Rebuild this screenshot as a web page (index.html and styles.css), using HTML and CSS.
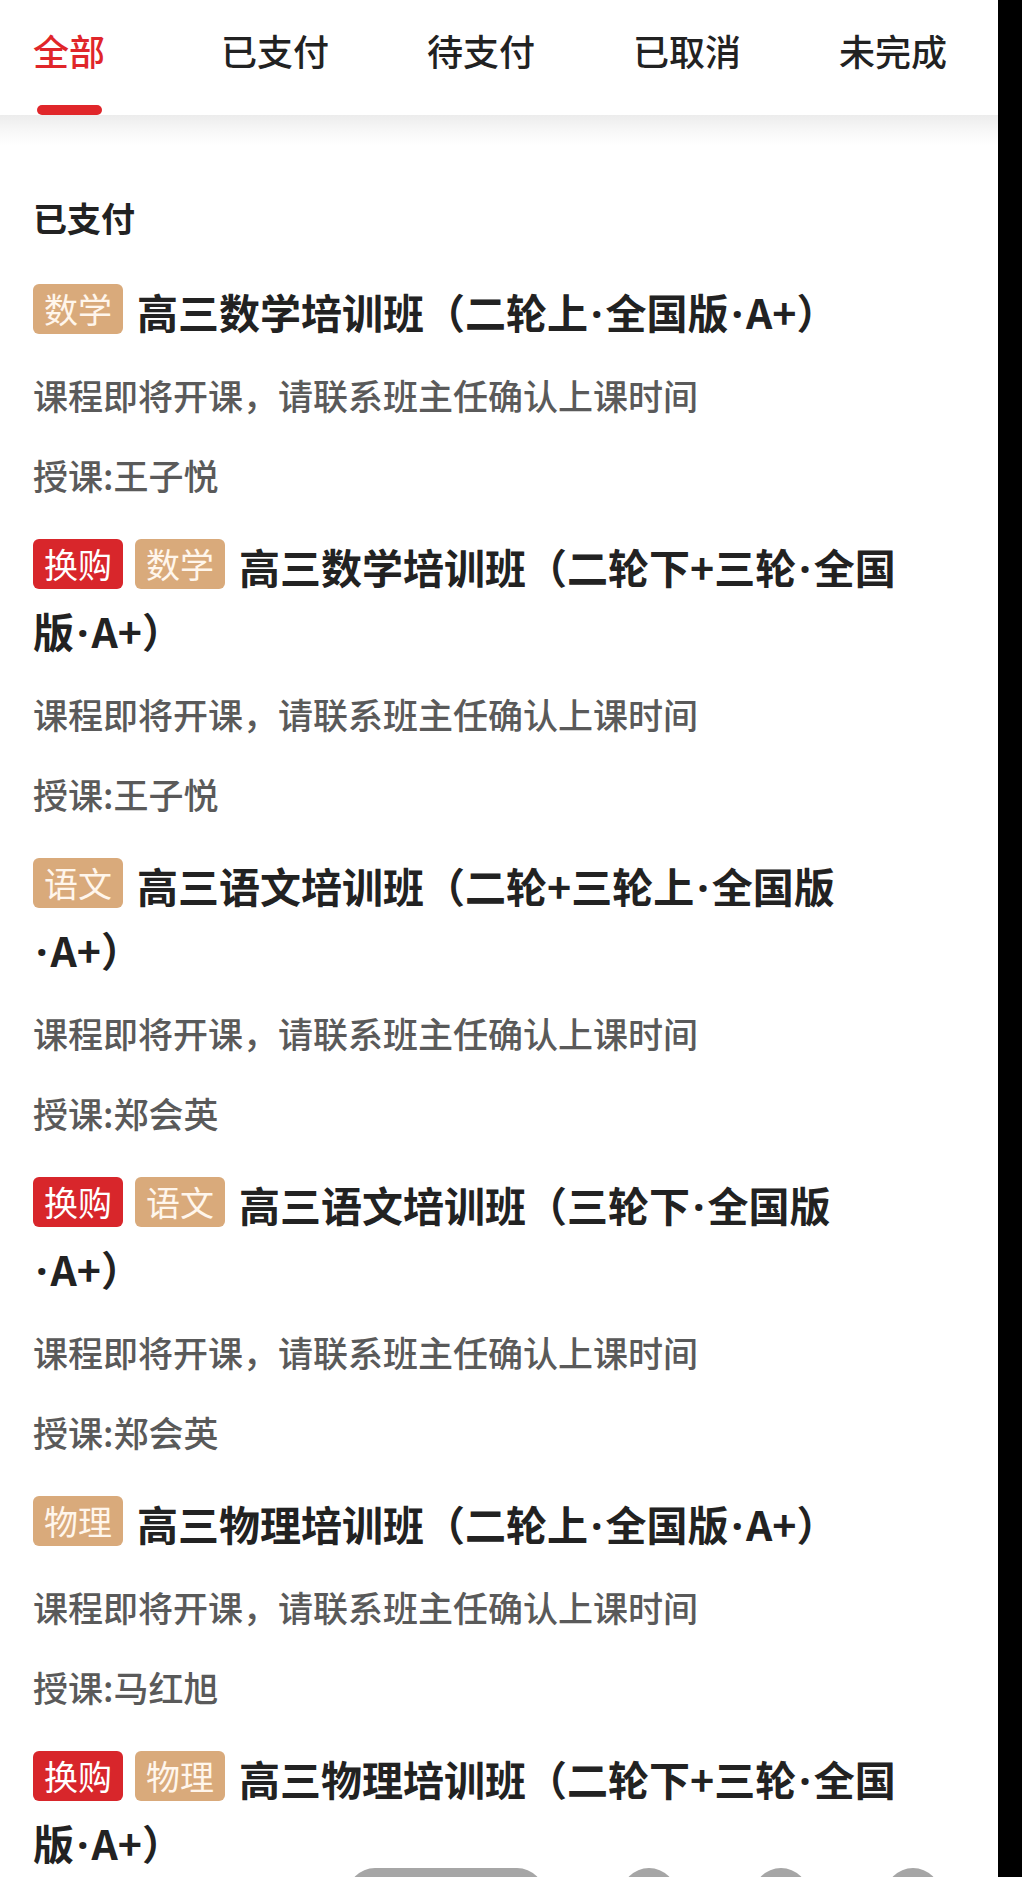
FILE: index.html
```html
<!DOCTYPE html>
<html lang="zh-CN">
<head>
<meta charset="utf-8">
<title>订单</title>
<link rel="stylesheet" href="styles.css">
</head>
<body>
<div class="page">
  <nav class="tabs">
    <div class="tab active">全部</div>
    <div class="tab">已支付</div>
    <div class="tab">待支付</div>
    <div class="tab">已取消</div>
    <div class="tab">未完成</div>
  </nav>
  <div class="band"></div>

  <section class="section">
    <h2 class="section-title">已支付</h2>
    <div class="list">
      <div class="course">
        <div class="title"><span class="tag subj">数学</span><span class="name">高三数学培训班（二轮上<span class="sep">·</span>全国版<span class="sep">·</span>A+）</span></div>
        <div class="desc">课程即将开课，请联系班主任确认上课时间</div>
        <div class="teacher">授课:王子悦</div>
      </div>
      <div class="course">
        <div class="title"><span class="tag swap">换购</span><span class="tag subj">数学</span><span class="name">高三数学培训班（二轮下+三轮<span class="sep">·</span>全国版<span class="sep">·</span>A+）</span></div>
        <div class="desc">课程即将开课，请联系班主任确认上课时间</div>
        <div class="teacher">授课:王子悦</div>
      </div>
      <div class="course">
        <div class="title"><span class="tag subj">语文</span><span class="name">高三语文培训班（二轮+三轮上<span class="sep">·</span>全国版<span class="sep">·</span>A+）</span></div>
        <div class="desc">课程即将开课，请联系班主任确认上课时间</div>
        <div class="teacher">授课:郑会英</div>
      </div>
      <div class="course">
        <div class="title"><span class="tag swap">换购</span><span class="tag subj">语文</span><span class="name">高三语文培训班（三轮下<span class="sep">·</span>全国版<span class="sep">·</span>A+）</span></div>
        <div class="desc">课程即将开课，请联系班主任确认上课时间</div>
        <div class="teacher">授课:郑会英</div>
      </div>
      <div class="course">
        <div class="title"><span class="tag subj">物理</span><span class="name">高三物理培训班（二轮上<span class="sep">·</span>全国版<span class="sep">·</span>A+）</span></div>
        <div class="desc">课程即将开课，请联系班主任确认上课时间</div>
        <div class="teacher">授课:马红旭</div>
      </div>
      <div class="course">
        <div class="title"><span class="tag swap">换购</span><span class="tag subj">物理</span><span class="name">高三物理培训班（二轮下+三轮<span class="sep">·</span>全国版<span class="sep">·</span>A+）</span></div>
        <div class="desc">课程即将开课，请联系班主任确认上课时间</div>
        <div class="teacher">授课:马红旭</div>
      </div>
    </div>
  </section>

  <div class="floating">
    <span class="pill"></span>
    <span class="dot"></span>
    <span class="dot"></span>
    <span class="dot"></span>
  </div>
</div>
</body>
</html>
```
FILE: styles.css
```css
html {
  background: #000;
}
body {
  margin: 0;
  background: #000;
  font-family: "Noto Sans CJK SC", "Noto Sans", sans-serif;
  color: #222;
}
.page {
  position: relative;
  width: 998px;
  height: 1877px;
  overflow: hidden;
  background: #fff;
}

/* tabs */
.tabs {
  display: flex;
  height: 115px;
  padding-left: 33px;
  background: #fff;
}
.tab {
  position: relative;
  width: 206px;
  padding-top: 25px;
  font-size: 36px;
  line-height: 50px;
  font-weight: 500;
  text-align: center;
  color: #222;
  box-sizing: border-box;
}
.tab.active {
  width: auto;
  margin-right: 67px;
  color: #e0262a;
}
.tab.active::after {
  content: "";
  position: absolute;
  left: 50%;
  bottom: 0;
  width: 65px;
  height: 10px;
  margin-left: -32px;
  border-radius: 5px;
  background: #e0262a;
}
.band {
  height: 30px;
  background: linear-gradient(#ececec, #f6f6f6 45%, #fff);
}

/* section */
.section {
  padding: 49px 78px 0 33px;
}
.section-title {
  margin: 0;
  font-size: 34px;
  line-height: 48px;
  font-weight: 700;
  color: #222;
}
.list {
  display: flex;
  flex-direction: column;
  gap: 35px;
  margin-top: 37px;
}
.title {
  font-size: 41px;
  line-height: 64px;
  font-weight: 700;
  color: #222;
}
.sep {
  font-family: "Noto Sans", sans-serif;
  line-height: 1;
  padding: 0 3px;
}
.tag {
  display: inline-block;
  height: 50px;
  padding: 0 11px;
  margin-right: 12px;
  border-radius: 6px;
  font-size: 34px;
  line-height: 50px;
  font-weight: 400;
  color: #fff6ec;
  vertical-align: 6px;
}
.tag.subj {
  background: #d9aa7b;
  margin-right: 14px;
}
.tag.swap {
  background: #d8262b;
  color: #fff;
}
.desc,
.teacher {
  font-size: 35px;
  line-height: 48px;
  font-weight: 500;
  color: #5a5a5a;
}
.desc {
  margin-top: 28px;
}
.teacher {
  margin-top: 32px;
}

/* partially visible floating controls at the bottom */
.floating {
  position: absolute;
  left: 347px;
  top: 1868px;
  display: flex;
  gap: 76px;
}
.pill {
  display: block;
  width: 198px;
  height: 56px;
  border-radius: 28px;
  background: #a6a6a6;
}
.dot {
  display: block;
  width: 56px;
  height: 56px;
  border-radius: 50%;
  background: #a6a6a6;
}
```
